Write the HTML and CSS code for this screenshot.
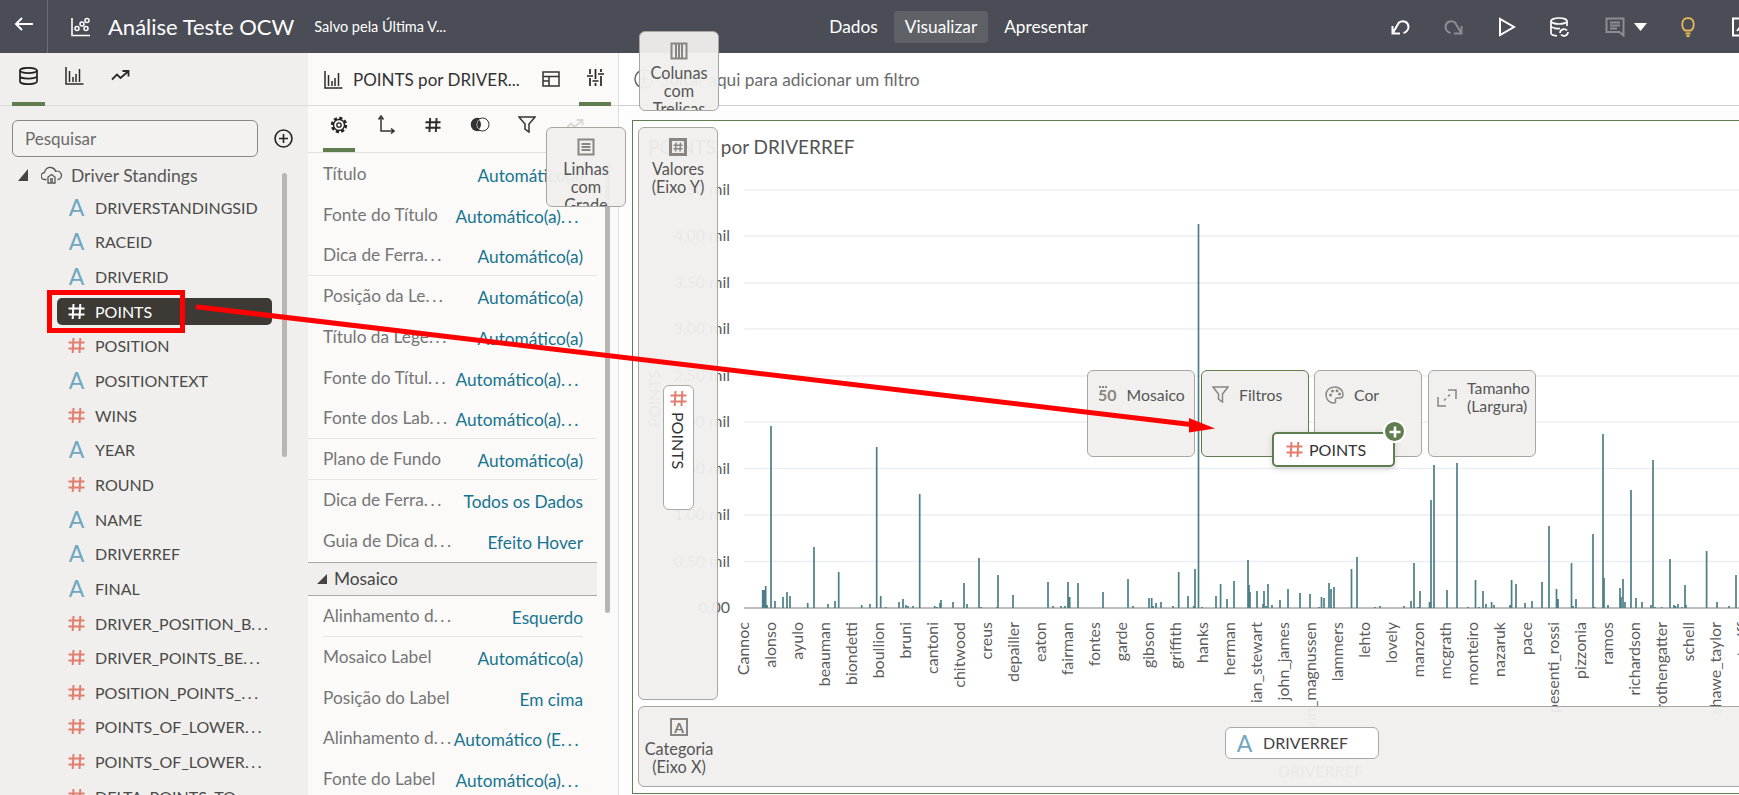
FILE: index.html
```html
<!DOCTYPE html>
<html lang="pt">
<head>
<meta charset="utf-8">
<title>Análise Teste OCW</title>
<link rel="stylesheet" href="styles.css">
</head>
<body>
<svg class="defs" width="0" height="0" aria-hidden="true">
  <defs>
    <symbol id="hash" viewBox="0 0 17 17"><path d="M5.5 1 4.7 16M12.3 1l-.8 15M.5 5.6h16M.5 11.4h16" fill="none" stroke="currentColor" stroke-width="2"/></symbol>
    <symbol id="bars" viewBox="0 0 19 19"><path d="M1 1v17h17.500M4.500 5v11M8 11v5M11 8v8M14.500 3v13" fill="none" stroke="currentColor" stroke-width="1.500"/></symbol>
    <symbol id="trend" viewBox="0 0 19 11"><path d="M1 9.500 6 4.500l3.500 3.500L17 1.500M11.500 1H17.500V6.500" fill="none" stroke="currentColor" stroke-width="1.800"/></symbol>
  </defs>
</svg>

<header class="topbar">
  <button class="back" aria-label="Voltar">
    <svg width="20" height="14" viewBox="0 0 20 14"><path d="M19 7H2M8 1 2 7l6 6" fill="none" stroke="#fff" stroke-width="2"/></svg>
  </button>
  <svg class="logo" width="20" height="20" viewBox="0 0 20 20"><path d="M1 1v17.500h18" fill="none" stroke="#fff" stroke-width="1.600"/><g fill="none" stroke="#fff" stroke-width="1.500"><circle cx="6" cy="11.500" r="2"/><circle cx="11" cy="7" r="2"/><circle cx="16" cy="3.500" r="2"/><circle cx="15" cy="11.500" r="2"/></g></svg>
  <h1 class="title">Análise Teste OCW</h1>
  <span class="saved">Salvo pela Última V...</span>
  <nav class="modes">
    <a class="mode">Dados</a>
    <a class="mode mode-on">Visualizar</a>
    <a class="mode">Apresentar</a>
  </nav>
  <div class="tools">
    <svg class="tool" width="20" height="16" viewBox="0 0 20 16"><path d="M2.500 7v7.500H10M2.500 14.500 9 3.500C13 .5 18.500 3 18.500 8c0 3-2.500 5.500-5 6" fill="none" stroke="#fff" stroke-width="2"/></svg>
    <svg class="tool" width="20" height="16" viewBox="0 0 20 16"><path d="M17.500 7v7.500H10M17.500 14.500 11 3.500C7 .5 1.500 3 1.500 8c0 3 2.500 5.500 5 6" fill="none" stroke="#8b8e93" stroke-width="2"/></svg>
    <svg class="tool tool-play" width="18" height="20" viewBox="0 0 18 20"><path d="M2 2v16l14-8z" fill="none" stroke="#fff" stroke-width="2"/></svg>
    <svg class="tool" width="22" height="20" viewBox="0 0 22 20"><g fill="none" stroke="#fff" stroke-width="1.700"><ellipse cx="10" cy="4" rx="8" ry="3"/><path d="M2 4v12c0 1.500 2.500 2.500 6 2.800M18 4v5M2 9.500c2 2 7 2.300 9 2"/><path d="M11 16a4 4 0 0 1 7-2.500M19 15a4 4 0 0 1-7 2.500"/></g></svg>
    <svg class="tool tool-comment" width="20" height="20" viewBox="0 0 20 20"><path d="M1.500 1.500h17v17l-4-3.500h-13zM5 5.500h10M5 8.500h10M5 11.500h7" fill="none" stroke="#8b8e93" stroke-width="2"/></svg>
    <svg class="tool tool-caret" width="13" height="8" viewBox="0 0 13 8"><path d="M0 0h13L6.500 8z" fill="#fff"/></svg>
    <svg class="tool tool-bulb" width="16" height="20" viewBox="0 0 16 20"><path d="M5 13.500C1 10 1 1.200 8 1.200S15 10 11 13.500zM5.500 16.500h5M6.500 19h3" fill="none" stroke="#e8b95a" stroke-width="1.800"/></svg>
    <svg class="tool" width="20" height="20" viewBox="0 0 20 20"><path d="M1 1.500h17v17H1zM5 14l4-5 3 3 3-4" fill="none" stroke="#fff" stroke-width="2"/></svg>
  </div>
</header>

<main class="app">
  <aside class="data">
    <div class="tabs">
      <span class="tab tab-on">
        <svg width="19" height="18" viewBox="0 0 19 18"><g fill="none" stroke="#222" stroke-width="1.700"><ellipse cx="9.500" cy="3.500" rx="8.500" ry="2.700"/><path d="M1 3.500v11c0 1.500 3.800 2.700 8.500 2.700s8.500-1.200 8.500-2.700v-11M1 9c0 1.500 3.800 2.700 8.500 2.700S18 10.500 18 9"/></g></svg>
      </span>
      <span class="tab"><svg class="ic-dark" width="19" height="19"><use href="#bars"/></svg></span>
      <span class="tab"><svg class="ic-dark" width="19" height="11"><use href="#trend"/></svg></span>
    </div>
    <div class="search">
      <div class="search-box">Pesquisar</div>
      <svg width="19" height="19" viewBox="0 0 19 19"><circle cx="9.500" cy="9.500" r="8.500" fill="none" stroke="#222" stroke-width="1.600"/><path d="M9.500 5v9M5 9.500h9" stroke="#222" stroke-width="1.600"/></svg>
    </div>
    <div class="source">
      <svg width="10" height="12" viewBox="0 0 10 12"><path d="M10 0v12H0z" fill="#444"/></svg>
      <svg class="cloud" width="22" height="18" viewBox="0 0 22 18"><path d="M5.500 13.500H4a3.500 3.500 0 0 1-.5-7C4 3 7 1 10 1.500c2.500.3 4 2 4.700 3.800a4 4 0 0 1 2.800 8.200h-1M7 17v-6l3.500-2.500L14 11v6zM9 13h3M9 15h3" fill="none" stroke="#555" stroke-width="1.300"/></svg>
      <span>Driver Standings</span>
    </div>
    <ul class="fields">
      <li class="row"><div class="field"><span class="a">A</span>DRIVERSTANDINGSID</div></li>
      <li class="row"><div class="field"><span class="a">A</span>RACEID</div></li>
      <li class="row"><div class="field"><span class="a">A</span>DRIVERID</div></li>
      <li class="row"><div class="field field-on"><svg class="h" width="17" height="17"><use href="#hash"/></svg>POINTS</div></li>
      <li class="row"><div class="field"><svg class="h" width="17" height="17"><use href="#hash"/></svg>POSITION</div></li>
      <li class="row"><div class="field"><span class="a">A</span>POSITIONTEXT</div></li>
      <li class="row"><div class="field"><svg class="h" width="17" height="17"><use href="#hash"/></svg>WINS</div></li>
      <li class="row"><div class="field"><span class="a">A</span>YEAR</div></li>
      <li class="row"><div class="field"><svg class="h" width="17" height="17"><use href="#hash"/></svg>ROUND</div></li>
      <li class="row"><div class="field"><span class="a">A</span>NAME</div></li>
      <li class="row"><div class="field"><span class="a">A</span>DRIVERREF</div></li>
      <li class="row"><div class="field"><span class="a">A</span>FINAL</div></li>
      <li class="row"><div class="field"><svg class="h" width="17" height="17"><use href="#hash"/></svg>DRIVER_POSITION_B<span class="dots">...</span></div></li>
      <li class="row"><div class="field"><svg class="h" width="17" height="17"><use href="#hash"/></svg>DRIVER_POINTS_BE<span class="dots">...</span></div></li>
      <li class="row"><div class="field"><svg class="h" width="17" height="17"><use href="#hash"/></svg>POSITION_POINTS_<span class="dots">...</span></div></li>
      <li class="row"><div class="field"><svg class="h" width="17" height="17"><use href="#hash"/></svg>POINTS_OF_LOWER<span class="dots">...</span></div></li>
      <li class="row"><div class="field"><svg class="h" width="17" height="17"><use href="#hash"/></svg>POINTS_OF_LOWER<span class="dots">...</span></div></li>
      <li class="row"><div class="field"><svg class="h" width="17" height="17"><use href="#hash"/></svg>DELTA_POINTS_TO_<span class="dots">...</span></div></li>
    </ul>
    <div class="scroll scroll-data"></div>
  </aside>

  <section class="props">
    <div class="props-head">
      <svg class="ic-dark" width="19" height="19"><use href="#bars"/></svg>
      <span class="props-title">POINTS por DRIVER...</span>
      <svg class="ph-grid" width="18" height="16" viewBox="0 0 18 16"><path d="M1 1h16v14H1zM1 5.500h16M7 5.500V15M1 10h6" fill="none" stroke="#333" stroke-width="1.500"/></svg>
      <span class="ph-sliders">
        <svg width="17" height="17" viewBox="0 0 17 17"><path d="M3 0v5M3 9v8M8.500 0v10M8.500 14v3M14 0v3M14 7v10M0 7h6M5.500 12h6M11 5h6" fill="none" stroke="#222" stroke-width="1.700"/></svg>
      </span>
    </div>
    <div class="subtabs">
      <span class="st st-on"><svg width="18" height="18" viewBox="0 0 18 18"><g fill="none" stroke="#222"><circle cx="9" cy="9" r="5.500" stroke-width="1.400"/><circle cx="9" cy="9" r="2.200" stroke-width="1.300"/><circle cx="9" cy="9" r="7" stroke-width="2.400" stroke-dasharray="3.200 2.300"/></g></svg></span>
      <span class="st"><svg width="18" height="19" viewBox="0 0 18 19"><path d="M4 3v13h13M1.500 4.500 4 1l2.500 3.500M14 13.500l3 2.500-3 2.500" fill="none" stroke="#333" stroke-width="1.500"/></svg></span>
      <span class="st"><svg class="ic-dark" width="16" height="16"><use href="#hash"/></svg></span>
      <span class="st"><svg width="20" height="15" viewBox="0 0 20 15"><circle cx="7.500" cy="7.500" r="6.800" fill="#333"/><circle cx="12.500" cy="7.500" r="6.500" fill="#fbfaf9" stroke="#333"/><path d="M9 2.800a6.500 6.500 0 0 1 0 9.400 6.800 6.800 0 0 1 0-9.400z" fill="#333"/></svg></span>
      <span class="st"><svg width="18" height="17" viewBox="0 0 18 17"><path d="M1 1h16l-6 7v8l-4-3V8z" fill="none" stroke="#333" stroke-width="1.500"/></svg></span>
      <span class="st"><svg class="ic-ghost" width="19" height="11"><use href="#trend"/></svg></span>
    </div>
    <div class="rows">
      <div class="p"><span class="k">Título</span><span class="v">Automático(a)</span></div>
      <div class="p"><span class="k">Fonte do Título</span><span class="v v-cut">Automático(a)<span class="dots">...</span></span></div>
      <div class="p p-sep"><span class="k">Dica de Ferra<span class="dots">...</span></span><span class="v">Automático(a)</span></div>
      <div class="p"><span class="k">Posição da Le<span class="dots">...</span></span><span class="v">Automático(a)</span></div>
      <div class="p"><span class="k">Título da Lege<span class="dots">...</span></span><span class="v">Automático(a)</span></div>
      <div class="p"><span class="k">Fonte do Títul<span class="dots">...</span></span><span class="v v-cut">Automático(a)<span class="dots">...</span></span></div>
      <div class="p p-sep"><span class="k">Fonte dos Lab<span class="dots">...</span></span><span class="v v-cut">Automático(a)<span class="dots">...</span></span></div>
      <div class="p p-sep"><span class="k">Plano de Fundo</span><span class="v">Automático(a)</span></div>
      <div class="p"><span class="k">Dica de Ferra<span class="dots">...</span></span><span class="v">Todos os Dados</span></div>
      <div class="p"><span class="k">Guia de Dica d<span class="dots">...</span></span><span class="v">Efeito Hover</span></div>
      <div class="section"><svg width="10" height="10" viewBox="0 0 10 10"><path d="M10 0v10H0z" fill="#444"/></svg>Mosaico</div>
      <div class="p p-inset"><span class="k">Alinhamento d<span class="dots">...</span></span><span class="v">Esquerdo</span></div>
      <div class="p"><span class="k">Mosaico Label</span><span class="v">Automático(a)</span></div>
      <div class="p"><span class="k">Posição do Label</span><span class="v">Em cima</span></div>
      <div class="p"><span class="k">Alinhamento d<span class="dots">...</span></span><span class="v v-cut">Automático (E<span class="dots">...</span></span></div>
      <div class="p"><span class="k">Fonte do Label</span><span class="v v-cut">Automático(a)<span class="dots">...</span></span></div>
    </div>
    <div class="scroll scroll-props"></div>
  </section>

  <section class="canvas">
    <div class="filterbar">
      <svg width="20" height="20" viewBox="0 0 20 20"><circle cx="10" cy="10" r="9" fill="none" stroke="#666" stroke-width="1.500"/><path d="M10 5v10M5 10h10" stroke="#666" stroke-width="1.500"/></svg>
      <span>Soltar aqui para adicionar um filtro</span>
    </div>
    <div class="frame">
      <svg class="chart" width="1106" height="672" viewBox="633 121 1106 672" role="img" aria-label="POINTS por DRIVERREF">
        <text class="c-title" x="648" y="154">POINTS por DRIVERREF</text>
        <path class="grid" d="M744 190H1739M744 236H1739M744 283H1739M744 329H1739M744 376H1739M744 422H1739M744 468.500H1739M744 515H1739M744 561.500H1739"/>
        <g class="y-labels">
          <text x="730" y="195">4,50 mil</text><text x="730" y="241">4,00 mil</text><text x="730" y="288">3,50 mil</text><text x="730" y="334">3,00 mil</text><text x="730" y="381">2,50 mil</text><text x="730" y="427">2,00 mil</text><text x="730" y="474">1,50 mil</text><text x="730" y="520">1,00 mil</text><text x="730" y="567">0,50 mil</text><text x="730" y="613">0,00</text>
        </g>
        <text class="y-title" transform="rotate(-90 660 399)" x="660" y="399">POINTS</text>
        <path class="axis" d="M744 608H1739"/>
        <path class="bars" d="M762.7 608V590M764 608V590M765.7 608V586M767 608V605M771 608V426M775 608V601M783 608V597M787 608V592M790 608V596M807.7 608V603M814 608V547M828 608V604M835 608V601M838.7 608V572M861.7 608V605M870 608V604M876.7 608V447M880.7 608V596M885.7 608V607M899 608V602M903 608V599M906 608V605M908 608V606M913 608V606M919.7 608V494M934.7 608V606M936.7 608V607M940 608V603M941 608V600M953 608V602M964 608V583M967 608V604M979 608V558M981 608V607M997 608V607M998 608V575M1013 608V595M1048 608V582M1053 608V606M1061 608V606M1065 608V606M1068 608V582M1069.7 608V597M1078 608V583M1103 608V592M1128 608V579M1133 608V606M1149 608V598M1151.7 608V598M1153 608V606M1156 608V603M1161 608V602M1173 608V606M1178.7 608V572M1188 608V596M1193.7 608V606M1195 608V569M1198.5 608V224M1202 608V607M1216 608V596M1220.6 608V584M1227 608V599M1234 608V581M1248 608V560M1249 608V585M1250 608V592M1257 608V591M1263 608V604M1264 608V591M1266 608V606M1268 608V584M1272 608V605M1280 608V600M1288 608V589M1300 608V593M1310 608V594M1319 608V607M1321.5 608V597M1324 608V598M1329 608V583M1331 608V589M1334 608V587M1351.5 608V569M1357 608V557M1375 608V607M1380 608V606M1404 608V606M1411 608V601M1414 608V563M1418 608V607M1420 608V591M1429.5 608V602M1431 608V500M1434 608V465M1447 608V590M1457 608V463M1468 608V607M1475.5 608V580M1479 608V607M1483 608V591M1486 608V604M1491.6 608V602M1494 608V605M1510 608V605M1511.6 608V580M1516 608V584M1525 608V603M1532 608V601M1542 608V582M1549 608V526M1556.5 608V589M1558 608V599M1571.5 608V563M1573 608V606M1576 608V599M1593 608V534M1594.6 608V607M1603 608V434M1604 608V578M1608 608V605M1620 608V588M1621 608V597M1623 608V579M1625 608V602M1631 608V490M1636 608V598M1642 608V602M1651 608V605M1653 608V460M1655 608V607M1661.6 608V607M1670 608V559M1674 608V605M1675.5 608V606M1678 608V604M1682 608V607M1685 608V585M1686 608V605M1706.6 608V551M1717 608V602M1729 608V606M1736 608V575"/>
        <g class="x-labels">
          <text transform="rotate(-90 748.5 622)" x="748.5" y="622">Cannoc</text>
          <text transform="rotate(-90 775.5 622)" x="775.5" y="622">alonso</text>
          <text transform="rotate(-90 802.5 622)" x="802.5" y="622">ayulo</text>
          <text transform="rotate(-90 829.5 622)" x="829.5" y="622">beauman</text>
          <text transform="rotate(-90 856.5 622)" x="856.5" y="622">biondetti</text>
          <text transform="rotate(-90 883.5 622)" x="883.5" y="622">boullion</text>
          <text transform="rotate(-90 910.5 622)" x="910.5" y="622">bruni</text>
          <text transform="rotate(-90 937.5 622)" x="937.5" y="622">cantoni</text>
          <text transform="rotate(-90 964.5 622)" x="964.5" y="622">chitwood</text>
          <text transform="rotate(-90 991.5 622)" x="991.5" y="622">creus</text>
          <text transform="rotate(-90 1018.5 622)" x="1018.5" y="622">depailler</text>
          <text transform="rotate(-90 1045.5 622)" x="1045.5" y="622">eaton</text>
          <text transform="rotate(-90 1072.5 622)" x="1072.5" y="622">fairman</text>
          <text transform="rotate(-90 1099.5 622)" x="1099.5" y="622">fontes</text>
          <text transform="rotate(-90 1126.5 622)" x="1126.5" y="622">garde</text>
          <text transform="rotate(-90 1153.5 622)" x="1153.5" y="622">gibson</text>
          <text transform="rotate(-90 1180.5 622)" x="1180.5" y="622">griffith</text>
          <text transform="rotate(-90 1207.5 622)" x="1207.5" y="622">hanks</text>
          <text transform="rotate(-90 1234.5 622)" x="1234.5" y="622">herman</text>
          <text transform="rotate(-90 1261.5 622)" x="1261.5" y="622">ian_stewart</text>
          <text transform="rotate(-90 1288.5 622)" x="1288.5" y="622">john_james</text>
          <text transform="rotate(-90 1315.5 622)" x="1315.5" y="622">kevin_magnussen</text>
          <text transform="rotate(-90 1342.5 622)" x="1342.5" y="622">lammers</text>
          <text transform="rotate(-90 1369.5 622)" x="1369.5" y="622">lehto</text>
          <text transform="rotate(-90 1396.5 622)" x="1396.5" y="622">lovely</text>
          <text transform="rotate(-90 1423.5 622)" x="1423.5" y="622">manzon</text>
          <text transform="rotate(-90 1450.5 622)" x="1450.5" y="622">mcgrath</text>
          <text transform="rotate(-90 1477.5 622)" x="1477.5" y="622">monteiro</text>
          <text transform="rotate(-90 1504.5 622)" x="1504.5" y="622">nazaruk</text>
          <text transform="rotate(-90 1531.5 622)" x="1531.5" y="622">pace</text>
          <text transform="rotate(-90 1558.5 622)" x="1558.5" y="622">pesenti_rossi</text>
          <text transform="rotate(-90 1585.5 622)" x="1585.5" y="622">pizzonia</text>
          <text transform="rotate(-90 1612.5 622)" x="1612.5" y="622">ramos</text>
          <text transform="rotate(-90 1639.5 622)" x="1639.5" y="622">richardson</text>
          <text transform="rotate(-90 1666.5 622)" x="1666.5" y="622">rothengatter</text>
          <text transform="rotate(-90 1693.5 622)" x="1693.5" y="622">schell</text>
          <text transform="rotate(-90 1720.5 622)" x="1720.5" y="622">shawe_taylor</text>
          <text transform="rotate(-90 1747.5 622)" x="1747.5" y="622">stroiff</text>
        </g>
        <text class="x-title" x="1278" y="777">DRIVERREF</text>
      </svg>
    </div>
  </section>
</main>

<div class="drop drop-cols">
  <svg class="drop-ic" width="18" height="18" viewBox="0 0 18 18"><path d="M1.500 1.500h15v15h-15zM6 1.500v15M9 1.500v15M12 1.500v15" fill="none" stroke="#8a8580" stroke-width="2"/></svg>
  <span>Colunas<br>com<br>Treliças</span>
</div>
<div class="drop drop-rows">
  <svg class="drop-ic" width="18" height="18" viewBox="0 0 18 18"><path d="M1.500 1.500h15v15h-15zM4.500 6h9M4.500 9h9M4.500 12h9" fill="none" stroke="#8a8580" stroke-width="2"/></svg>
  <span>Linhas<br>com<br>Grade</span>
</div>
<div class="drop drop-values">
  <svg class="drop-ic" width="18" height="18" viewBox="0 0 18 18"><path d="M1.500 1.500h15v15h-15z" fill="none" stroke="#8a8580" stroke-width="3"/><path d="M7 4.500 6.500 13.500M11.500 4.500l-.5 9M4.500 7.200h9M4.500 10.800h9" fill="none" stroke="#8a8580" stroke-width="1.500"/></svg>
  <span>Valores<br>(Eixo Y)</span>
  <div class="chip-v">
    <svg class="h" width="17" height="17"><use href="#hash"/></svg>
    <span>POINTS</span>
  </div>
</div>
<div class="drop drop-cat">
  <div class="cat-head">
    <span class="a-box">A</span>
    <span>Categoria<br>(Eixo X)</span>
  </div>
  <div class="chip-h"><span class="a">A</span>DRIVERREF</div>
</div>
<div class="drop drop-small drop-mosaic"><span class="fifty">50</span><span>Mosaico</span></div>
<div class="drop drop-small drop-filter">
  <svg width="17" height="17" viewBox="0 0 17 17"><path d="M1 1h15l-5.500 7v8l-4-3V8z" fill="none" stroke="#8a8580" stroke-width="1.500"/></svg>
  <span>Filtros</span>
</div>
<div class="drop drop-small drop-color">
  <svg width="19" height="18" viewBox="0 0 19 18"><path d="M9.500 1C4.500 1 1 4.500 1 9s3.500 8 8 8c1.500 0 2-1 1.500-2.200-.6-1.400.2-2.800 2-2.800H15c2 0 3-1.300 3-3.500C18 4 14.500 1 9.500 1z" fill="none" stroke="#8a8580" stroke-width="1.500"/><circle cx="5.500" cy="9" r="1.500" fill="#8a8580"/><circle cx="7.500" cy="5" r="1.500" fill="#8a8580"/><circle cx="12" cy="4.800" r="1.500" fill="#8a8580"/><circle cx="14.500" cy="8" r="1.500" fill="#8a8580"/></svg>
  <span>Cor</span>
</div>
<div class="drop drop-small drop-size">
  <svg width="20" height="18" viewBox="0 0 20 18"><path d="M1 8v9h8M11 1h8v9M7 11.500 9 9.500M11 7.500 13 5.500" fill="none" stroke="#8a8580" stroke-width="1.500"/></svg>
  <span>Tamanho<br>(Largura)</span>
</div>

<div class="drag-chip">
  <svg class="h" width="17" height="17"><use href="#hash"/></svg>
  <span>POINTS</span>
  <span class="drag-plus"><svg width="12" height="12" viewBox="0 0 12 12"><path d="M6 .500v11M.500 6h11" stroke="#fff" stroke-width="2.600"/></svg></span>
</div>

<div class="mark-box"></div>
<svg class="mark-arrow" width="1739" height="795" viewBox="0 0 1739 795" aria-hidden="true">
  <path d="M198 307 1195 425" stroke="#f00" stroke-width="5" stroke-linecap="round" fill="none"/>
  <path d="M1189 418 1215 428.500 1189 432.500z" fill="#f00"/>
</svg>
</body>
</html>
```
FILE: styles.css
```css
* { box-sizing: border-box; }
html, body { margin: 0; height: 100%; }
body {
  position: relative;
  width: 1739px;
  height: 795px;
  overflow: hidden;
  font-family: Lato, "Noto Sans", sans-serif;
  font-size: 16px;
  color: #444;
  background: #fff;
}
.defs { position: absolute; }
.dots { letter-spacing: 2.6px; }

/* top bar */
.topbar {
  display: flex;
  align-items: center;
  height: 53px;
  background: #4a4d55;
  color: #fff;
  overflow: hidden;
}
.topbar > * { flex: none; }
.back {
  width: 48px;
  height: 53px;
  padding: 0 0 3px 0;
  border: 0;
  border-right: 1px solid #6a6d74;
  background: none;
}
.logo { margin-left: 23px; }
.title { margin: 0 0 0 17px; font-size: 22px; font-weight: 400; white-space: nowrap; }
.saved { margin-left: 20px; width: 133px; font-size: 14.5px; white-space: nowrap; }
.modes { display: flex; align-items: center; width: 279px; margin-left: 371px; font-size: 17.3px; }
.mode { display: block; padding: 0 11px; margin-right: 5px; height: 32px; line-height: 31px; border-radius: 3px; }
.mode-on { background: #5e6166; }
.tools { display: flex; align-items: center; margin-left: 293px; }
.tool { display: block; flex: none; margin-right: 34px; }
.tool-play { margin-right: 33px; }
.tool-comment { margin-right: 9px; }
.tool-caret { margin-right: 33px; }
.tool-bulb { margin-right: 36px; }

/* app */
.app { display: flex; height: 742px; overflow: hidden; }

/* data panel */
.data { position: relative; flex: none; width: 308px; background: #f0efed; overflow: hidden; }
.tabs {
  display: flex;
  height: 53px;
  border-bottom: 1px solid #dcdbd8;
  padding-left: 12px;
  color: #222;
}
.tab { display: flex; align-items: center; justify-content: center; width: 33px; height: 53px; margin-right: 13px; padding-bottom: 8px; }
.tab-on { height: 53px; border-bottom: 4px solid #5f7d4f; padding-bottom: 4px; }
.ic-dark { color: #2b2b2b; display: block; }
.ic-ghost { color: #d9d8d5; display: block; }
.search { display: flex; align-items: center; gap: 16px; padding: 14px 0 0 12px; }
.search-box {
  width: 246px;
  height: 37px;
  padding-left: 12px;
  line-height: 35px;
  border: 1px solid #8a8886;
  border-radius: 6px;
  color: #6a6a6a;
  font-size: 17px;
  background: #f3f2f0;
}
.source { display: flex; align-items: center; height: 30px; margin-top: 3px; padding-left: 18px; font-size: 17.5px; color: #555; white-space: nowrap; }
.cloud { margin: 0 8px 0 13px; }
.fields { list-style: none; margin: 0; padding: 0 0 0 57px; width: 272px; font-size: 16px; }
.row { display: flex; align-items: center; height: 34.65px; }
.field {
  display: flex;
  align-items: center;
  flex: 1;
  height: 27px;
  padding-left: 11px;
  border-radius: 5px;
  white-space: nowrap;
  color: #4a4a48;
}
.field-on { background: #3d3a35; color: #fff; }
.field-on .h { color: #fff; }
.h { display: block; flex: none; color: #e17f6e; margin-right: 10px; }
.a { display: block; flex: none; width: 17px; margin-right: 10px; color: #6fa6c0; font-size: 23px; line-height: 23px; text-align: center; }
.scroll { position: absolute; width: 5px; border-radius: 3px; background: #b9b5b0; }
.scroll-data { left: 282px; top: 120px; height: 284px; }
.scroll-props { left: 297px; top: 108px; height: 452px; }

/* properties panel */
.props { position: relative; flex: none; width: 311px; background: #fbfaf9; border-right: 1px solid #dededc; overflow: hidden; }
.props-head { display: flex; align-items: center; height: 53px; border-bottom: 1px solid #dcdbd8; padding-left: 16px; }
.props-title { margin-left: 10px; width: 189px; font-size: 17px; color: #333; white-space: nowrap; }
.ph-grid { flex: none; }
.ph-sliders { display: flex; align-items: center; justify-content: center; flex: none; align-self: flex-start; width: 32px; height: 53px; margin-left: 19px; border-bottom: 4px solid #5f7d4f; }
.subtabs { display: flex; height: 47px; border-bottom: 1px solid #e1e0de; padding-left: 15px; }
.st { display: flex; align-items: center; justify-content: center; width: 32px; height: 46px; margin-right: 15px; padding-bottom: 9px; }
.st-on { border-bottom: 4px solid #5f7d4f; padding-bottom: 5px; }
.rows { width: 289px; padding-top: 1px; font-size: 17.3px; }
.p {
  display: flex;
  align-items: center;
  justify-content: space-between;
  height: 40.7px;
  margin: 0;
  padding: 0 14px 0 15px;
  white-space: nowrap;
}
.p-sep { border-bottom: 1px solid #e6e5e3; }
.p-inset { position: relative; }
.p-inset::after { content: ""; position: absolute; left: 15px; right: 14px; bottom: 0; border-bottom: 1px solid #e6e5e3; }
.k { color: #767676; padding-bottom: 1px; }
.v { color: #16748f; padding-top: 3px; }
.v-cut { padding-right: 2px; }
.section {
  display: flex;
  align-items: center;
  gap: 7px;
  height: 34px;
  margin-top: 1px;
  padding-left: 9px;
  background: #f0efed;
  border-top: 1px solid #a9a8a6;
  border-bottom: 1px solid #a9a8a6;
  color: #444;
}

/* canvas */
.canvas { flex: 1; min-width: 0; background: #fdfdfd; overflow: hidden; }
.filterbar {
  display: flex;
  align-items: center;
  gap: 6px;
  height: 53px;
  padding-left: 15px;
  background: #fff;
  border-bottom: 1px solid #cfcecc;
  color: #6b6b6b;
  font-size: 17.3px;
}
.frame { height: 674px; margin: 14px 0 0 13px; border: 1px solid #5f7d4f; border-right: 0; background: #fff; }
.chart { display: block; font-family: Lato, "Noto Sans", sans-serif; }
.c-title { font-size: 19px; fill: #555; }
.grid { stroke: #ebeef1; stroke-width: 1.500; fill: none; }
.axis { stroke: #a9a9a9; stroke-width: 1.500; fill: none; }
.bars { stroke: #4c7f85; stroke-width: 1.700; fill: none; }
.y-labels text { font-size: 16px; fill: #5c5c5c; text-anchor: end; }
.y-title { font-size: 16px; fill: #5c5c5c; text-anchor: middle; }
.x-labels text { font-size: 16px; fill: #5c5c5c; text-anchor: end; }
.x-title { font-size: 16px; fill: #5c5c5c; }

/* drop targets that lie over the chart */
.drop {
  position: absolute;
  display: flex;
  flex-direction: column;
  align-items: center;
  overflow: hidden;
  background: rgba(240, 239, 237, 0.95);
  border: 1px solid #a9a6a2;
  border-radius: 6px;
  color: #555;
  font-size: 16.3px;
  line-height: 18px;
  text-align: center;
}
.drop-ic { display: block; flex: none; margin: 10px 0 4px; }
.drop-cols { left: 639px; top: 31px; width: 80px; height: 80px; }
.drop-rows { left: 546px; top: 127px; width: 80px; height: 80px; }
.drop-values { left: 638px; top: 127px; width: 80px; height: 573px; }
.chip-v {
  display: flex;
  flex-direction: column;
  align-items: center;
  gap: 5px;
  width: 31px;
  height: 125px;
  margin-top: 189px;
  padding-top: 4px;
  background: #fff;
  border: 1px solid #aaa8a5;
  border-radius: 6px;
  color: #333;
  font-size: 16px;
}
.chip-v .h { margin: 0; }
.chip-v span { writing-mode: vertical-rl; }
.drop-cat {
  left: 638px;
  top: 706px;
  width: 1120px;
  height: 81px;
  flex-direction: row;
  align-items: flex-start;
  padding-top: 11px;
}
.cat-head { display: flex; flex-direction: column; align-items: center; flex: none; width: 80px; }
.a-box {
  display: block;
  width: 18px;
  height: 18px;
  margin-bottom: 4px;
  border: 2px solid #8a8580;
  color: #7c7873;
  font-size: 14px;
  font-weight: 700;
  line-height: 15px;
}
.chip-h {
  display: flex;
  align-items: center;
  width: 154px;
  height: 32px;
  margin: 9px 0 0 506px;
  padding-left: 10px;
  background: #fff;
  border: 1px solid #aaa8a5;
  border-radius: 6px;
  color: #444;
  font-size: 16px;
}
.drop-small {
  top: 370px;
  width: 108px;
  height: 87px;
  flex-direction: row;
  align-items: flex-start;
  padding: 15px 0 0 10px;
  gap: 10px;
  font-size: 15.8px;
  text-align: left;
}
.drop-small > svg { flex: none; }
.drop-mosaic { left: 1087px; }
.drop-filter { left: 1201px; border-color: #5f7d4f; }
.drop-color { left: 1314px; }
.drop-size { left: 1428px; padding-left: 8px; gap: 10px; padding-top: 8px; }
.drop-size > svg { margin-top: 10px; }
.fifty { position: relative; color: #8a8580; font-weight: 700; font-size: 16px; }
.fifty::before {
  content: "";
  position: absolute;
  left: 1px;
  top: 0;
  width: 8px;
  border-top: 2px dotted #8a8580;
}

/* dragged item */
.drag-chip {
  position: absolute;
  left: 1272px;
  top: 432px;
  display: flex;
  align-items: center;
  gap: 6px;
  width: 123px;
  height: 35px;
  padding-left: 12px;
  background: #fff;
  border: 2px solid #5f7d4f;
  border-radius: 5px;
  box-shadow: 0 2px 6px rgba(0, 0, 0, 0.15);
  color: #333;
}
.drag-chip .h { margin: 0; }
.drag-plus {
  position: absolute;
  right: -13px;
  top: -14px;
  display: flex;
  align-items: center;
  justify-content: center;
  width: 23px;
  height: 23px;
  background: #5f7d4f;
  border: 2px solid #fff;
  border-radius: 50%;
}

/* annotation */
.mark-box { position: absolute; left: 47px; top: 290px; width: 138px; height: 43px; border: 5px solid #f00; }
.mark-arrow { position: absolute; left: 0; top: 0; pointer-events: none; }
```
